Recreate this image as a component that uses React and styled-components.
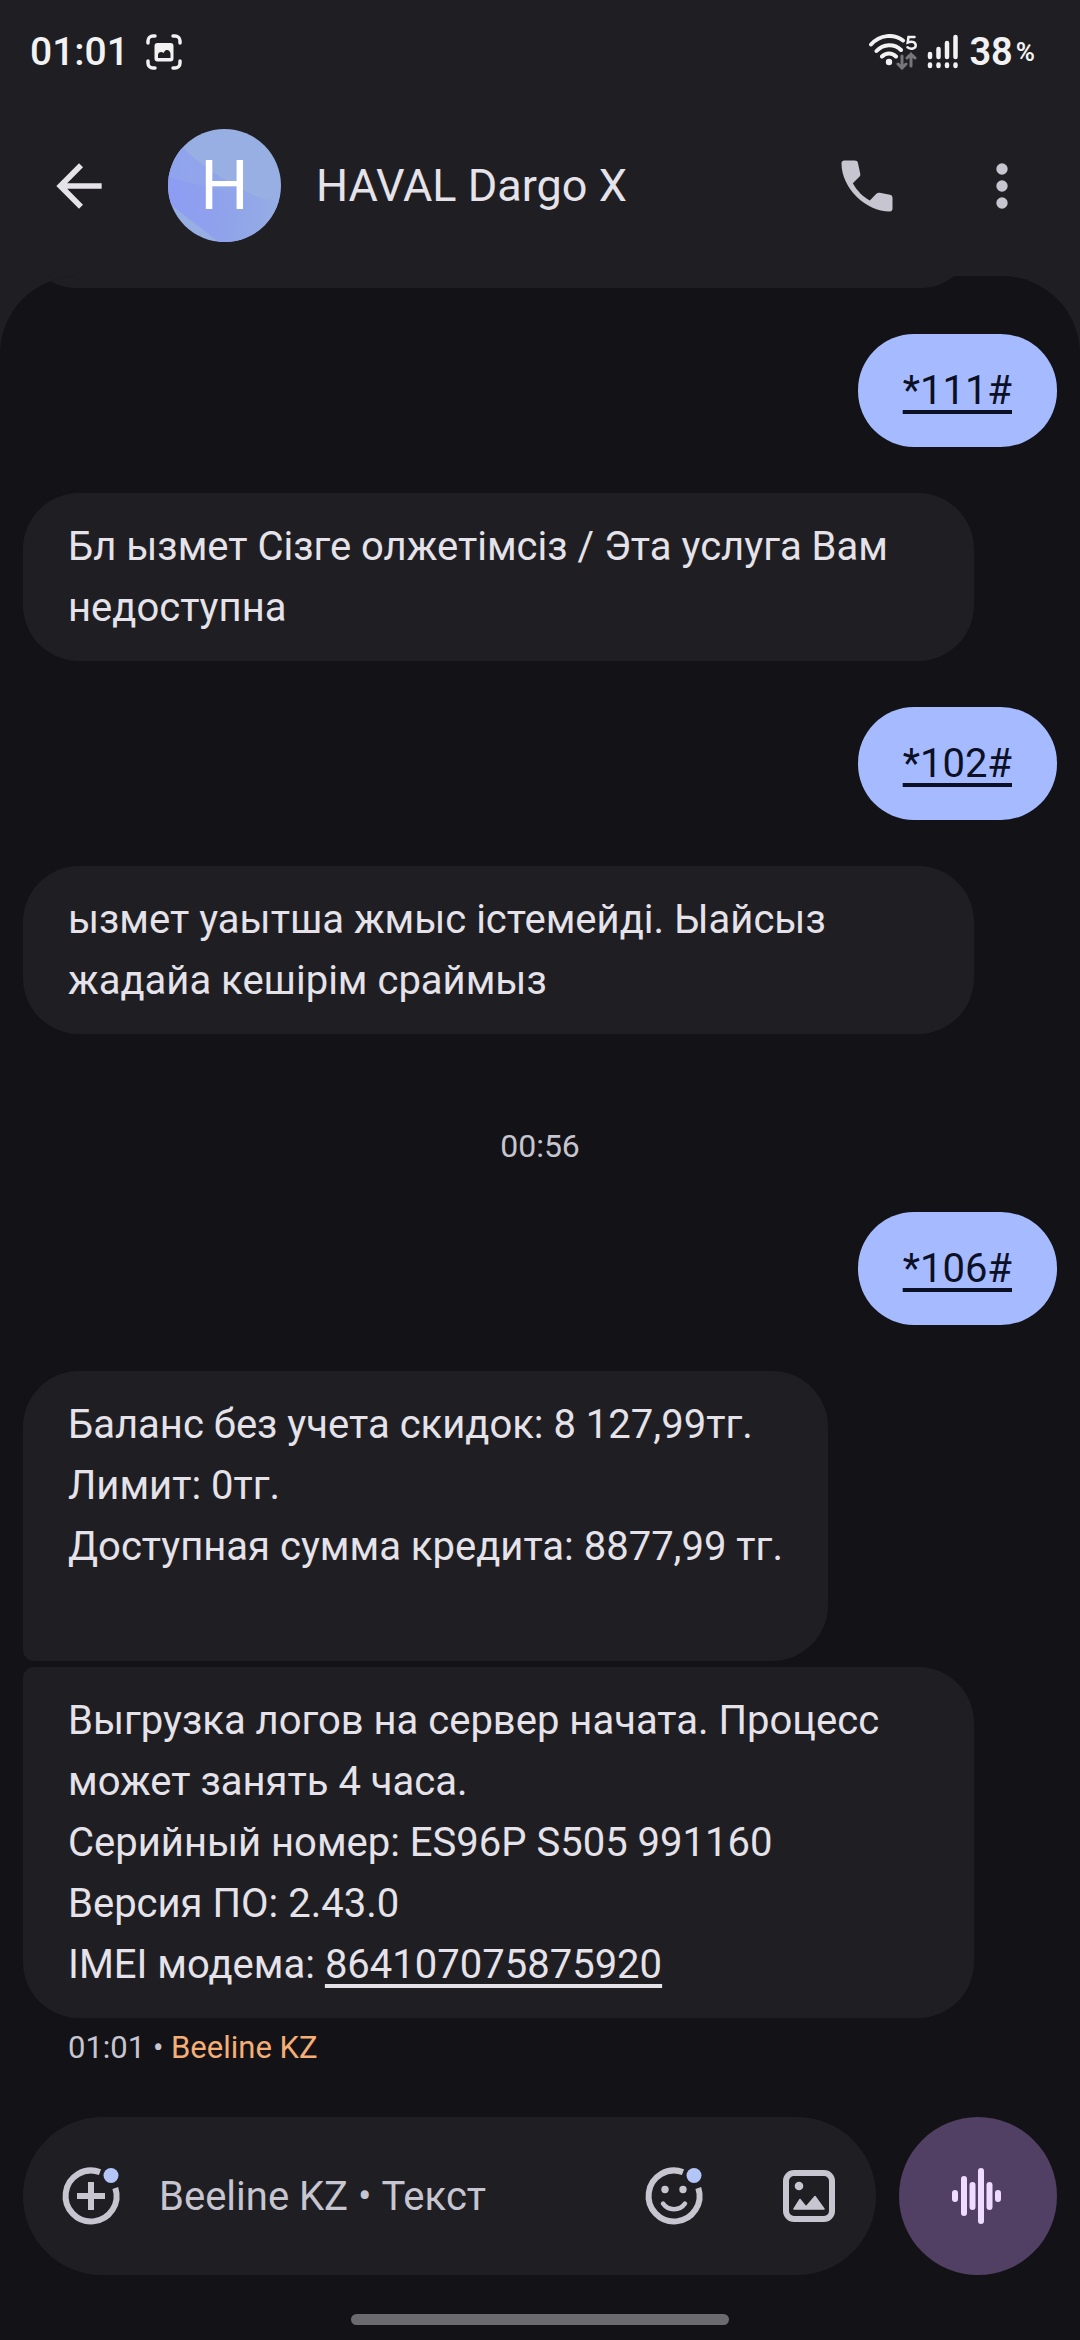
import React from 'react';
import styled, { createGlobalStyle } from 'styled-components';

const colors = {
  surface: '#1f1f23',
  background: '#131317',
  accent: '#a6baff',
  onAccent: '#0c1024',
  text: '#e5e2e9',
  muted: '#c7c5d0',
  voice: '#523f64',
  onVoice: '#efdbff',
  sim: '#f5ae75',
};

const GlobalStyle = createGlobalStyle`
  * {
    box-sizing: border-box;
  }
  body {
    margin: 0;
    background-color: ${colors.background};
    font-family: Roboto, "Noto Sans", sans-serif;
  }
  button {
    padding: 0;
    border: 0;
    background: none;
    font: inherit;
    cursor: pointer;
  }
  svg {
    display: block;
    flex: none;
  }
`;

const Screen = styled.div`
  min-height: 100vh;
  display: flex;
  flex-direction: column;
  background-color: ${colors.surface};
  color: ${colors.text};
`;

const StatusBar = styled.div`
  display: flex;
  align-items: center;
  justify-content: space-between;
  height: 103px;
  padding: 0 45px 0 30px;
  color: #f2f2f2;
`;

const StatusGroup = styled.div`
  display: flex;
  align-items: center;
  gap: ${props => props.$gap}px;
`;

const Clock = styled.time`
  font-size: 39px;
  font-weight: 500;
  line-height: 48px;
`;

const Battery = styled.span`
  display: flex;
  align-items: center;
  gap: 3px;
  font-size: 38px;
  font-weight: 600;
  line-height: 48px;
  small {
    font-size: 26px;
  }
`;

const Header = styled.header`
  display: flex;
  align-items: center;
  height: 173px;
  padding: 0 44px 8px 45px;
`;

const IconButton = styled.button`
  display: flex;
  align-items: center;
  justify-content: center;
  flex: none;
  width: 68px;
  height: 68px;
  color: ${props => props.$color || colors.muted};
`;

const Avatar = styled.div`
  display: grid;
  place-items: center;
  flex: none;
  width: 113px;
  height: 113px;
  margin: 0 35px 0 55px;
  border-radius: 50%;
  overflow: hidden;
  background-color: #97afe2;
  color: #fff;
  font-size: 68px;
  line-height: 1;
  > * {
    grid-area: 1 / 1;
  }
`;

const Title = styled.h1`
  flex: 1;
  margin: 0;
  font-size: 45px;
  font-weight: 400;
  line-height: 56px;
`;

const HeaderActions = styled.div`
  display: flex;
  gap: 67px;
`;

const Conversation = styled.main`
  flex: 1;
  display: flex;
  flex-direction: column;
  padding: 0 23px 15px;
  border-radius: 78px 78px 0 0;
  overflow: hidden;
  background-color: ${colors.background};
`;

const Thread = styled.ol`
  flex: 1;
  display: flex;
  flex-direction: column;
  gap: 46px;
  margin: 0;
  padding: 0;
  list-style: none;
`;

const Group = styled.li`
  display: flex;
  flex-direction: column;
  gap: 6px;
`;

const Bubble = styled.div`
  width: fit-content;
  max-width: 92%;
  min-width: ${props => (props.$wide ? '92%' : '0')};
  padding: 23px 45px;
  border-radius: 56px;
  background-color: ${colors.surface};
  font-size: 40px;
  line-height: 61px;
  ${props => props.$first && 'border-bottom-left-radius: 11px;'}
  ${props => props.$last && 'border-top-left-radius: 11px;'}
`;

// message that has scrolled up under the header
const ScrolledBubble = styled(Bubble)`
  height: 107px;
  margin-top: -95px;
`;

const SentBubble = styled(Bubble)`
  align-self: flex-end;
  padding: 26px 45px;
  background-color: ${colors.accent};
  color: ${colors.onAccent};
`;

const Line = styled.p`
  display: flex;
  flex-wrap: wrap;
  column-gap: 10px;
  min-height: 61px;
  margin: 0;
`;

const MessageLink = styled.a`
  color: inherit;
  text-decoration: underline;
  text-decoration-thickness: 4px;
  text-underline-offset: 6px;
  text-decoration-skip-ink: none;
`;

const TimeDivider = styled.li`
  margin-top: 46px;
  color: ${colors.muted};
  font-size: 32px;
  line-height: 40px;
  text-align: center;
`;

const Meta = styled.div`
  padding: 4px 45px;
  color: ${colors.muted};
  font-size: 31px;
  line-height: 40px;
  span {
    color: ${colors.sim};
  }
`;

const Composer = styled.form`
  display: flex;
  align-items: center;
  gap: 23px;
`;

const InputPill = styled.div`
  flex: 1;
  min-width: 0;
  display: flex;
  align-items: center;
  height: 158px;
  padding: 0 33px 0 34px;
  border-radius: 79px;
  background-color: ${colors.surface};
`;

const TextInput = styled.input`
  flex: 1;
  min-width: 0;
  height: 68px;
  margin: 0 34px;
  padding: 0;
  border: 0;
  outline: none;
  background: none;
  color: ${colors.text};
  font: inherit;
  font-size: 40px;
  &::placeholder {
    color: ${colors.muted};
    opacity: 1;
  }
`;

const InputActions = styled.div`
  display: flex;
  gap: 67px;
`;

const VoiceButton = styled.button`
  display: flex;
  align-items: center;
  justify-content: center;
  flex: none;
  width: 158px;
  height: 158px;
  border-radius: 50%;
  background-color: ${colors.voice};
  color: ${colors.onVoice};
`;

const HomeIndicator = styled.div`
  width: 378px;
  height: 11px;
  margin: 39px auto 0;
  border-radius: 6px;
  background-color: #6b6a6e;
`;

const ScreenshotIcon = () => (
  <svg width="36" height="36" viewBox="0 0 36 36" fill="none" stroke="currentColor" strokeWidth="3.500" strokeLinecap="round">
    <path d="M2 9V7a5 5 0 0 1 5-5h2M27 2h2a5 5 0 0 1 5 5v2M34 27v2a5 5 0 0 1-5 5h-2M9 34H7a5 5 0 0 1-5-5v-2" />
    <path
      fill="currentColor"
      stroke="none"
      fillRule="evenodd"
      d="M11.500 9h13a3 3 0 0 1 3 3v12.500a3 3 0 0 1-3 3h-13a3 3 0 0 1-3-3V12a3 3 0 0 1 3-3zM12 24h12.500v-4c0-3-3.500-6-6-2.500l-1 1.500c-2-2-5.500-1-5.500 2z"
    />
  </svg>
);

const WifiIcon = () => (
  <svg width="48" height="36" viewBox="0 0 48 36" fill="none" stroke="currentColor" strokeWidth="4" strokeLinecap="round">
    <path d="M2 10.500c9-10 23-11 32-4M7.500 17c7-7.500 18-7.500 24.500-1M13 22.500c4-4 10-4 14 0" />
    <circle cx="20" cy="28" r="3.200" fill="currentColor" stroke="none" />
    <path d="M45.500 3H39.500l-.8 5.500c5-2 8 0 8 3s-4.500 4.500-8.200 1.800" strokeWidth="2.500" />
    <path d="M33 22v12M29 30l4 4 4-4M42 32V20M38 24l4-4 4 4" stroke="#77777a" strokeWidth="3" />
  </svg>
);

const SignalIcon = () => (
  <svg width="32" height="36" viewBox="0 0 32 36" fill="none" stroke="currentColor" strokeWidth="4.500" strokeLinecap="round">
    <path d="M3 20v3M11.500 15v8M20 9v14M28.500 3v20M3 30.500v1.500M11.500 30.500v1.500M20 30.500v1.500M28.500 30.500v1.500" />
  </svg>
);

const AvatarArt = () => (
  <svg width="113" height="113" viewBox="0 0 113 113">
    <defs>
      <linearGradient id="avatar-band" x1="0" y1="0.5" x2="1" y2="0.6">
        <stop offset="0" stopColor="#8d9cf4" />
        <stop offset="0.500" stopColor="#8fa2eb" />
        <stop offset="1" stopColor="#95ade4" />
      </linearGradient>
    </defs>
    <path d="M0 4l16 16c16 15 42 36 97 58v35H51L3 76 0 72z" fill="url(#avatar-band)" />
    <path d="M0 48c30 8 70 20 113 24v6C70 62 42 44 16 20L0 4z" fill="#93a8ea" opacity="0.600" />
  </svg>
);

const BackIcon = () => (
  <svg width="68" height="68" viewBox="0 0 24 24" fill="currentColor">
    <path d="M20 11H7.830l5.590-5.590L12 4l-8 8 8 8 1.410-1.410L7.830 13H20v-2z" />
  </svg>
);

const CallIcon = () => (
  <svg width="68" height="68" viewBox="0 0 24 24" fill="currentColor">
    <path d="M20.050 21C11.600 21 3 12.700 3 3.950 3 3.400 3.400 3 3.950 3H7.600c.65 0 1.100.3 1.200.85l.8 3.750c.1.500 0 .9-.3 1.150L7 11c1.500 2.700 3.600 4.800 6 6.100l2.300-2.350c.35-.35.75-.45 1.200-.35l3.600.7c.55.100.9.5.9 1.100v3.850c0 .55-.4.950-.95.950z" />
  </svg>
);

const MoreIcon = () => (
  <svg width="68" height="68" viewBox="0 0 24 24" fill="currentColor">
    <circle cx="12" cy="6" r="2" />
    <circle cx="12" cy="12" r="2" />
    <circle cx="12" cy="18" r="2" />
  </svg>
);

// open ring with a notification dot in its gap
const RingWithDot = () => (
  <>
    <path d="M43 10.100A25.500 25.500 0 1 0 58.300 26" fill="none" stroke="currentColor" strokeWidth="6" />
    <circle cx="54" cy="13.500" r="7.500" fill="#b4c5f8" />
  </>
);

const AddIcon = () => (
  <svg width="68" height="68" viewBox="0 0 68 68">
    <RingWithDot />
    <path d="M34 20v28M20 34h28" stroke="currentColor" strokeWidth="6" />
  </svg>
);

const EmojiIcon = () => (
  <svg width="68" height="68" viewBox="0 0 68 68">
    <RingWithDot />
    <circle cx="25" cy="27.500" r="3.700" fill="currentColor" />
    <circle cx="43" cy="27.500" r="3.700" fill="currentColor" />
    <path d="M23 41.500c5 7.500 17 7.500 22 0" fill="none" stroke="currentColor" strokeWidth="4.500" strokeLinecap="round" />
  </svg>
);

const GalleryIcon = () => (
  <svg width="68" height="68" viewBox="0 0 68 68">
    <rect x="11" y="11" width="46" height="46" rx="8" fill="none" stroke="currentColor" strokeWidth="6" />
    <circle cx="24" cy="24" r="4.300" fill="currentColor" />
    <path d="M19 47l6-9.500 6 7.500 9-10.500 9 12.500z" fill="currentColor" stroke="currentColor" strokeWidth="1.500" strokeLinejoin="round" />
  </svg>
);

const VoiceIcon = () => (
  <svg width="68" height="68" viewBox="0 0 68 68" fill="none" stroke="currentColor" strokeWidth="6" strokeLinecap="round">
    <path d="M11 31v6M20 17v34M28.500 23v22M37 9v50M45.500 23v22M54 31v6" />
  </svg>
);

const Ussd = ({ code }) => (
  <Group>
    <SentBubble>
      <MessageLink href={`tel:${encodeURIComponent(code)}`}>{code}</MessageLink>
    </SentBubble>
  </Group>
);

const App = () => (
  <Screen>
    <GlobalStyle />
    <StatusBar>
      <StatusGroup $gap={17}>
        <Clock>01:01</Clock>
        <ScreenshotIcon />
      </StatusGroup>
      <StatusGroup $gap={10}>
        <WifiIcon />
        <SignalIcon />
        <Battery>38<small>%</small></Battery>
      </StatusGroup>
    </StatusBar>
    <Header>
      <IconButton type="button" aria-label="Назад" $color={colors.text}>
        <BackIcon />
      </IconButton>
      <Avatar aria-hidden="true">
        <AvatarArt />
        <span>H</span>
      </Avatar>
      <Title>HAVAL Dargo X</Title>
      <HeaderActions>
        <IconButton type="button" aria-label="Позвонить">
          <CallIcon />
        </IconButton>
        <IconButton type="button" aria-label="Ещё">
          <MoreIcon />
        </IconButton>
      </HeaderActions>
    </Header>
    <Conversation>
      <Thread>
        <Group>
          <ScrolledBubble $wide />
        </Group>
        <Ussd code="*111#" />
        <Group>
          <Bubble $wide>Бл ызмет Сізге олжетімсіз / Эта услуга Вам недоступна</Bubble>
        </Group>
        <Ussd code="*102#" />
        <Group>
          <Bubble $wide>ызмет уаытша жмыс істемейді. Ыайсыз жадайа кешірім сраймыз</Bubble>
        </Group>
        <TimeDivider>00:56</TimeDivider>
        <Ussd code="*106#" />
        <Group>
          <Bubble $first>
            <Line>Баланс без учета скидок: 8 127,99тг.</Line>
            <Line>Лимит: 0тг.</Line>
            <Line>Доступная сумма кредита: 8877,99 тг.</Line>
            <Line />
          </Bubble>
          <Bubble $last $wide>
            <Line>Выгрузка логов на сервер начата. Процесс может занять 4 часа.</Line>
            <Line>Серийный номер: ES96P S505 991160</Line>
            <Line>Версия ПО: 2.43.0</Line>
            <Line>
              <span>IMEI модема:</span>
              <MessageLink href="tel:864107075875920">864107075875920</MessageLink>
            </Line>
          </Bubble>
          <Meta>01:01 • <span>Beeline KZ</span></Meta>
        </Group>
      </Thread>
      <Composer onSubmit={e => e.preventDefault()}>
        <InputPill>
          <IconButton type="button" aria-label="Прикрепить">
            <AddIcon />
          </IconButton>
          <TextInput type="text" aria-label="Сообщение" placeholder="Beeline KZ • Текст" />
          <InputActions>
            <IconButton type="button" aria-label="Эмодзи">
              <EmojiIcon />
            </IconButton>
            <IconButton type="button" aria-label="Галерея">
              <GalleryIcon />
            </IconButton>
          </InputActions>
        </InputPill>
        <VoiceButton type="button" aria-label="Голосовое сообщение">
          <VoiceIcon />
        </VoiceButton>
      </Composer>
      <HomeIndicator />
    </Conversation>
  </Screen>
);

export default App;
